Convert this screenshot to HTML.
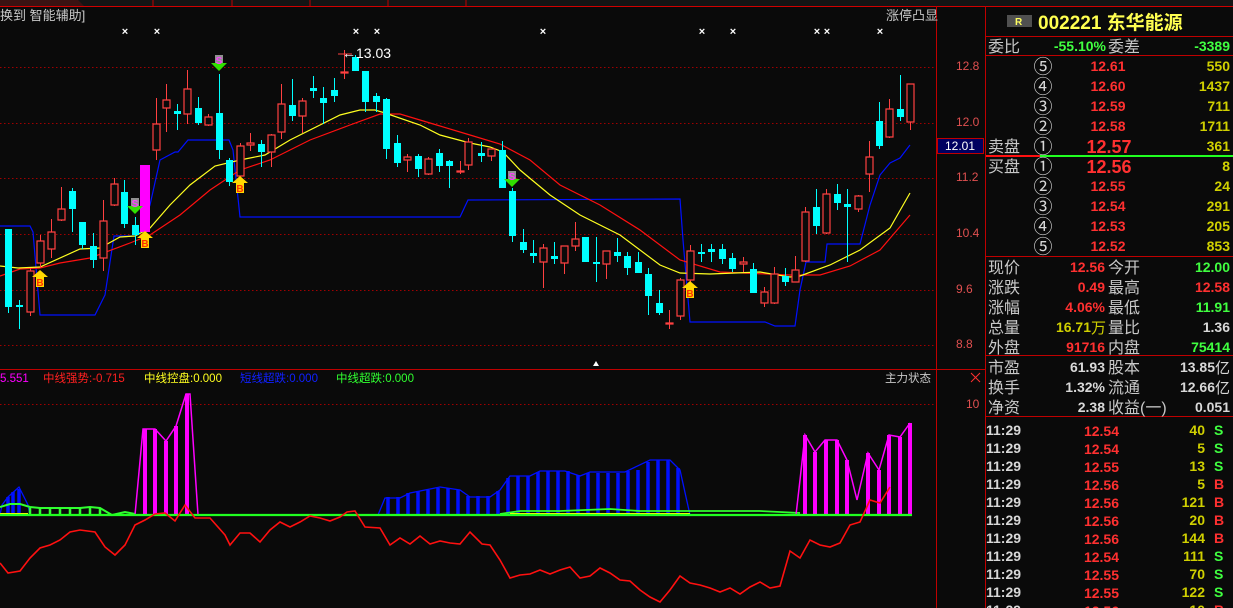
<!DOCTYPE html>
<html><head><meta charset="utf-8"><style>
html,body{margin:0;padding:0;background:#0a0a0a;width:1233px;height:608px;overflow:hidden}
svg{display:block}
text{font-family:"Liberation Sans","Noto Sans CJK SC",sans-serif}
.lb{fill:#c8c8c8;font-size:16px}
.rd{fill:#ff3030}
.ye{fill:#d0d000}
.gr{fill:#40ff40}
.wh{fill:#d8d8d8}
.n{font-size:14px;font-weight:bold;font-family:"Liberation Sans","DejaVu Sans",sans-serif}
.w{stroke:#ff4040;stroke-width:1}
.rb{fill:#0a0a0a;stroke:#ff4040;stroke-width:1.2}
.cw{stroke:#00ffff;stroke-width:1}
.cb{fill:#00ffff}
.g{stroke:#a00000;stroke-dasharray:1.5 2.5;stroke-width:1}
</style></head><body>
<svg width="1233" height="608" viewBox="0 0 1233 608" xmlns="http://www.w3.org/2000/svg">
<rect width="1233" height="608" fill="#0a0a0a"/>
<rect x="0" y="0" width="1233" height="6" fill="#141414"/>
<path d="M0 0H78L84 6H0Z" fill="#3a1212"/>
<path d="M153 0V6M232 0V6M310 0V6M388 0V6M466 0V6" stroke="#c00000"/>
<line x1="0" y1="6.5" x2="1233" y2="6.5" stroke="#d00000"/>
<line x1="936.5" y1="6" x2="936.5" y2="608" stroke="#c00000"/>
<line x1="985.5" y1="6" x2="985.5" y2="608" stroke="#c00000"/>
<line x1="0" y1="369.5" x2="985" y2="369.5" stroke="#c00000"/>
<path class="g" d="M0 67.5H936M0 123.5H936M0 178.5H936M0 234.5H936M0 290.5H936M0 345.5H936M0 404.5H936"/>
<text x="0" y="20" class="lb" style="font-size:13px">换到 智能辅助]</text>
<text x="886" y="20" class="lb" style="font-size:13px">涨停凸显</text>
<g fill="#fff" font-size="11" font-weight="bold" text-anchor="middle">
<text x="125" y="35">×</text><text x="157" y="35">×</text><text x="356" y="35">×</text><text x="377" y="35">×</text><text x="543" y="35">×</text><text x="702" y="35">×</text><text x="733" y="35">×</text><text x="817" y="35">×</text><text x="827" y="35">×</text><text x="880" y="35">×</text>
</g>
<g fill="#e05050" font-size="12" font-family="Liberation Mono,monospace">
<text x="956" y="70">12.8</text><text x="956" y="126">12.0</text><text x="956" y="181">11.2</text><text x="956" y="237">10.4</text><text x="956" y="293">9.6</text><text x="956" y="348">8.8</text>
<text x="966" y="408">10</text>
</g>
<rect x="937.5" y="138.5" width="46" height="15" fill="#000060" stroke="#c00000"/>
<text x="945" y="150" fill="#fff" font-size="12" font-family="Liberation Mono,monospace">12.01</text>
<polyline fill="none" stroke="#0010ff" stroke-width="1.2" points="0,226 30,226 33,232 40,315 95,315 105,295 114,236 135,236 140,232 150,205 160,160 175,152 178,152 188,140 229,140 233,150 240,217 460,217 468,200 680,199 683,240 690,322 765,322 775,326 795,326 800,290 806,262 825,262 827,244 860,244 870,205 880,175 890,163 900,158 910,145"/>
<polyline fill="none" stroke="#ff1010" stroke-width="1.2" points="0,276 20,269 40,268 60,263 90,258 130,243 150,235 180,215 210,190 240,170 270,160 310,140 350,125 380,114 400,114 430,123 470,135 500,144 530,160 560,185 600,205 640,230 680,260 720,272 790,275 820,275 850,266 880,250 910,215"/>
<polyline fill="none" stroke="#ffff20" stroke-width="1.2" points="0,266 18,268 40,267 80,249 100,248 120,237 135,236 150,228 170,205 190,185 215,166 240,160 265,155 290,140 320,125 340,115 360,110 375,110 385,113 420,125 440,135 470,143 490,147 503,152 520,170 550,195 580,215 620,235 660,265 680,273 710,274 760,272 790,277 800,276 830,265 860,250 890,228 910,193"/>
<rect x="140" y="165" width="10" height="67" fill="#ff00ff"/>
<g>
<path class="cw" d="M8.5 229V313M19.5 300V329M72.5 188V232M82.5 222V249M93.5 233V268M124.5 180V228M135.5 217V245M177.5 104V130M198.5 97V125M219.5 74V159M229.5 158V186M261.5 140V167M292.5 79V121M313.5 76V98M323.5 87V124M334.5 78V102M355.5 55V71M365.5 71V112M376.5 93V112M386.5 98V159M397.5 135V167M418.5 154V177M439.5 149V172M449.5 160V188M481.5 142V162M502.5 141V188M512.5 188V242M523.5 229V253M533.5 240V263M554.5 242V264M585.5 237V262M596.5 237V282M617.5 238V262M627.5 252V275M638.5 252V273M648.5 268V315M659.5 290V315M701.5 244V262M711.5 244V262M722.5 244V264M732.5 253V272M753.5 263V293M785.5 268V286M816.5 189V234M837.5 184V210M847.5 189V262M879.5 102V149M900.5 75V121"/>
<path class="cb" d="M5 229h7v78h-7zM16 305h7v2h-7zM69 191h7v18h-7zM79 222h7v23h-7zM90 246h7v14h-7zM121 192h7v32h-7zM132 225h7v10h-7zM174 111h7v3h-7zM195 108h7v15h-7zM216 113h7v37h-7zM226 160h7v22h-7zM258 144h7v8h-7zM289 105h7v11h-7zM310 88h7v3h-7zM320 98h7v5h-7zM331 90h7v6h-7zM352 57h7v14h-7zM362 71h7v31h-7zM373 96h7v6h-7zM383 99h7v50h-7zM394 143h7v20h-7zM415 156h7v13h-7zM436 153h7v13h-7zM446 161h7v5h-7zM478 153h7v3h-7zM499 150h7v38h-7zM509 191h7v45h-7zM520 242h7v8h-7zM530 253h7v3h-7zM551 256h7v3h-7zM582 237h7v25h-7zM593 262h7v2h-7zM614 252h7v4h-7zM624 256h7v12h-7zM635 262h7v11h-7zM645 274h7v22h-7zM656 303h7v10h-7zM698 252h7v2h-7zM708 249h7v3h-7zM719 249h7v10h-7zM729 258h7v11h-7zM750 269h7v24h-7zM782 276h7v6h-7zM813 207h7v19h-7zM834 194h7v9h-7zM844 204h7v3h-7zM876 121h7v25h-7zM897 109h7v8h-7z"/>
</g>
<path class="w" d="M30.5 268V316M40.5 235V268M51.5 219V258M61.5 187V221M103.5 200V271M114.5 178V206M156.5 98V160M166.5 84V132M187.5 70V124M208.5 114V126M240.5 143V181M250.5 133V151M271.5 134V167M281.5 84V139M302.5 98V133M344.5 50V79M407.5 154V172M428.5 157V175M460.5 161V174M468.5 138V170M491.5 149V161M543.5 244V288M564.5 246V274M575.5 222V251M606.5 251V279M669.5 310V329M680.5 278V320M690.5 245V290M743.5 257V272M764.5 287V307M774.5 267V304M795.5 256V282M805.5 207V262M826.5 189V234M858.5 195V212M869.5 141V192M889.5 99V138M910.5 84V130"/>
<path class="rb" d="M27 271h7v41h-7zM37 241h7v22h-7zM48 232h7v17h-7zM58 209h7v11h-7zM100 221h7v37h-7zM111 184h7v21h-7zM153 124h7v26h-7zM163 100h7v8h-7zM184 89h7v25h-7zM205 117h7v8h-7zM237 146h7v30h-7zM247 143h7v2h-7zM268 135h7v17h-7zM278 104h7v28h-7zM299 101h7v15h-7zM341 72h7v1h-7zM404 157h7v3h-7zM425 159h7v15h-7zM457 171h7v1h-7zM465 142h7v23h-7zM488 149h7v7h-7zM540 248h7v14h-7zM561 246h7v17h-7zM572 239h7v7h-7zM603 251h7v13h-7zM666 323h7v1h-7zM677 280h7v36h-7zM687 251h7v29h-7zM740 262h7v2h-7zM761 292h7v11h-7zM771 274h7v29h-7zM792 270h7v12h-7zM802 212h7v49h-7zM823 194h7v39h-7zM855 196h7v13h-7zM866 157h7v17h-7zM886 109h7v28h-7zM907 84h7v38h-7z"/>
<path d="M338 54h14" stroke="#ff4040"/>
<text x="342" y="58" fill="#fff" font-size="14" font-family="Liberation Mono,monospace">←13.03</text>
<g>
<g transform="translate(40,270)"><path d="M0 0L8 7H4V17H-4V7H-8Z" fill="#ffd800"/><text x="0" y="16" text-anchor="middle" fill="#ff3000" font-size="10" font-weight="bold">B</text></g>
<g transform="translate(145,231)"><path d="M0 0L8 7H4V17H-4V7H-8Z" fill="#ffd800"/><text x="0" y="16" text-anchor="middle" fill="#ff3000" font-size="10" font-weight="bold">B</text></g>
<g transform="translate(240,176)"><path d="M0 0L8 7H4V17H-4V7H-8Z" fill="#ffd800"/><text x="0" y="16" text-anchor="middle" fill="#ff3000" font-size="10" font-weight="bold">B</text></g>
<g transform="translate(690,281)"><path d="M0 0L8 7H4V17H-4V7H-8Z" fill="#ffd800"/><text x="0" y="16" text-anchor="middle" fill="#ff3000" font-size="10" font-weight="bold">B</text></g>
</g>
<g>
<g transform="translate(135,198)"><rect x="-4" y="0" width="8" height="9" fill="#909090"/><path d="M-8 8H8L0 16Z" fill="#30e000"/><text x="0" y="9" text-anchor="middle" fill="#ff40ff" font-size="10" font-weight="bold">S</text></g>
<g transform="translate(219,55)"><rect x="-4" y="0" width="8" height="9" fill="#909090"/><path d="M-8 8H8L0 16Z" fill="#30e000"/><text x="0" y="9" text-anchor="middle" fill="#ff40ff" font-size="10" font-weight="bold">S</text></g>
<g transform="translate(512,171)"><rect x="-4" y="0" width="8" height="9" fill="#909090"/><path d="M-8 8H8L0 16Z" fill="#30e000"/><text x="0" y="9" text-anchor="middle" fill="#ff40ff" font-size="10" font-weight="bold">S</text></g>
</g>
<path d="M596 361L599 366H593Z" fill="#fff"/>
<g font-size="11.5" font-family="Liberation Sans,Noto Sans CJK SC,sans-serif">
<text x="0" y="382" fill="#ff00ff">5.551</text>
<text x="43" y="382" fill="#ff2020">中线强势:-0.715</text>
<text x="144" y="382" fill="#ffff20">中线控盘:0.000</text>
<text x="240" y="382" fill="#1020ff">短线超跌:0.000</text>
<text x="336" y="382" fill="#30ff30">中线超跌:0.000</text>
<text x="885" y="382" fill="#c8c8c8">主力状态</text>
</g>
<path d="M971 373l9 9M980 373l-9 9" stroke="#ff3030"/>
<polyline points="0,515 2,505 8,497 19,487 28,505 30,515" fill="none" stroke="#0010ff" stroke-width="1.3"/>
<path d="M378 515L385 498H400L410 493L440 487L460 490L470 497H490L500 490L510 476H530L540 471H565L580 476L590 472H625L650 460H670L680 470L690 515Z" fill="none" stroke="#0010ff" stroke-width="1.3"/>
<path d="M8 515V497M13 515V492M19 515V489M388 515V497M398 515V497M408 515V493M418 515V491M428 515V490M438 515V488M448 515V488M458 515V490M468 515V496M478 515V496M488 515V496M498 515V491M508 515V478M518 515V476M528 515V476M538 515V472M548 515V471M558 515V471M568 515V471M578 515V475M588 515V473M598 515V473M608 515V473M618 515V473M628 515V471M638 515V470M648 515V462M658 515V460M668 515V460M678 515V468" stroke="#0010ff" stroke-width="3.5"/>
<polyline fill="none" stroke="#30ff30" stroke-width="2" points="0,507 10,504 20,504 30,507 40,508 80,508 90,507 100,508 112,515 125,512 135,514"/>
<path d="M30 515V508M40 515V508M50 515V508M60 515V508M70 515V508M80 515V508M90 515V507M100 515V508" stroke="#30ff30" stroke-width="2.5"/>
<polyline fill="none" stroke="#30ff30" stroke-width="1.8" points="500,514 520,511 560,511 585,510 610,509 640,511 680,511 740,511 760,511 800,513"/>
<path d="M0 514H28M510 514H690" stroke="#ffff00" stroke-width="2"/>
<polyline fill="none" stroke="#ff00ff" stroke-width="1.5" points="135,515 143,429 155,429 166,441 176,426 186,394 190,394 198,515"/>
<path d="M145 515V429M155 515V429M166 515V441M176 515V426M187 515V394" stroke="#ff00ff" stroke-width="4"/>
<polyline fill="none" stroke="#ff00ff" stroke-width="1.5" points="796,515 800,480 805,435 815,452 825,440 837,440 847,460 857,500 868,453 879,470 889,435 900,437 910,423"/>
<path d="M805 515V435M815 515V452M826 515V440M837 515V440M847 515V460M868 515V453M879 515V470M889 515V435M900 515V437M910 515V423" stroke="#ff00ff" stroke-width="4"/>
<line x1="0" y1="515" x2="912" y2="515" stroke="#20ff20" stroke-width="2.2"/>
<polyline fill="none" stroke="#ff1010" stroke-width="1.6" points="0,563 8,573 20,571 30,558 40,548 50,545 60,540 70,532 80,530 95,532 105,547 115,555 125,545 135,525 145,520 155,514 165,513 175,521 185,505 195,518 210,518 225,535 230,545 240,533 250,533 260,542 270,530 280,522 290,527 300,522 310,516 320,518 330,521 340,517 347,512 355,511 365,527 380,528 390,545 400,538 410,544 420,536 430,544 440,541 450,543 460,544 470,532 482,544 490,545 500,560 510,578 520,575 530,574 540,570 550,574 560,570 570,567 580,578 590,576 600,568 610,573 620,580 630,581 640,590 650,597 660,602 670,590 680,576 690,583 700,585 710,588 720,592 730,588 740,594 750,587 760,582 770,588 780,586 790,551 800,558 810,540 820,545 830,547 840,543 850,525 860,522 870,500 880,503 890,487"/>
<rect x="1007" y="15" width="25" height="12" fill="#505050"/>
<text x="1015" y="25" fill="#ffff60" font-size="10" font-weight="bold">R</text>
<text x="1038" y="29" fill="#ffff50" font-size="19" font-weight="bold">002221 东华能源</text>
<path d="M986 36.5H1233M986 55.5H1233M986 256.5H1233M986 355.5H1233M986 416.5H1233" stroke="#c00000"/>
<line x1="986" y1="156" x2="1040" y2="156" stroke="#ff1010" stroke-width="2"/>
<line x1="1040" y1="156" x2="1233" y2="156" stroke="#20ff20" stroke-width="2"/>
<text x="988" y="52" class="lb">委比</text>
<text x="1106" y="51" class="gr n" text-anchor="end">-55.10%</text>
<text x="1108" y="52" class="lb">委差</text>
<text x="1230" y="51" class="gr n" text-anchor="end">-3389</text>
<g class="wh" font-size="19" text-anchor="middle">
<text x="1043" y="73">⑤</text><text x="1043" y="93">④</text><text x="1043" y="113">③</text><text x="1043" y="133">②</text><text x="1043" y="153">①</text>
<text x="1043" y="173">①</text><text x="1043" y="193">②</text><text x="1043" y="213">③</text><text x="1043" y="233">④</text><text x="1043" y="253">⑤</text>
</g>
<text x="988" y="152" class="lb">卖盘</text>
<text x="988" y="172" class="lb">买盘</text>
<g class="rd n" text-anchor="middle">
<text x="1108" y="71">12.61</text><text x="1108" y="91">12.60</text><text x="1108" y="111">12.59</text><text x="1108" y="131">12.58</text>
<text x="1109" y="153" font-size="18">12.57</text><text x="1109" y="173" font-size="18">12.56</text>
<text x="1108" y="191">12.55</text><text x="1108" y="211">12.54</text><text x="1108" y="231">12.53</text><text x="1108" y="251">12.52</text>
</g>
<g class="ye n" text-anchor="end">
<text x="1230" y="71">550</text><text x="1230" y="91">1437</text><text x="1230" y="111">711</text><text x="1230" y="131">1711</text><text x="1230" y="151">361</text>
<text x="1230" y="171">8</text><text x="1230" y="191">24</text><text x="1230" y="211">291</text><text x="1230" y="231">205</text><text x="1230" y="251">853</text>
</g>
<g class="lb">
<text x="988" y="273">现价</text><text x="988" y="293">涨跌</text><text x="988" y="313">涨幅</text><text x="988" y="333">总量</text><text x="988" y="353">外盘</text>
<text x="1108" y="273">今开</text><text x="1108" y="293">最高</text><text x="1108" y="313">最低</text><text x="1108" y="333">量比</text><text x="1108" y="353">内盘</text>
<text x="988" y="373">市盈</text><text x="988" y="393">换手</text><text x="988" y="413">净资</text>
<text x="1108" y="373">股本</text><text x="1108" y="393">流通</text><text x="1108" y="413">收益(一)</text>
</g>
<g class="n" text-anchor="end">
<text x="1105" y="272" class="rd">12.56</text><text x="1105" y="292" class="rd">0.49</text><text x="1105" y="312" class="rd">4.06%</text>
<text x="1091" y="332" class="ye">16.71</text><text x="1105" y="352" class="rd">91716</text>
<text x="1230" y="272" class="gr">12.00</text><text x="1230" y="292" class="rd">12.58</text><text x="1230" y="312" class="gr">11.91</text>
<text x="1230" y="332" class="wh">1.36</text><text x="1230" y="352" class="gr">75414</text>
<text x="1105" y="372" class="wh">61.93</text><text x="1105" y="392" class="wh">1.32%</text><text x="1105" y="412" class="wh">2.38</text>
<text x="1215" y="372" class="wh">13.85</text><text x="1215" y="392" class="wh">12.66</text><text x="1230" y="412" class="wh">0.051</text>
</g>
<text x="1091" y="333" class="ye" font-size="15">万</text>
<text x="1215" y="373" class="wh" font-size="15">亿</text>
<text x="1215" y="393" class="wh" font-size="15">亿</text>
<g class="n">
<g class="wh"><text x="986" y="435">11:29</text><text x="986" y="453">11:29</text><text x="986" y="471">11:29</text><text x="986" y="489">11:29</text><text x="986" y="507">11:29</text><text x="986" y="525">11:29</text><text x="986" y="543">11:29</text><text x="986" y="561">11:29</text><text x="986" y="579">11:29</text><text x="986" y="597">11:29</text><text x="986" y="615">11:29</text></g>
<g class="rd" text-anchor="end"><text x="1119" y="436">12.54</text><text x="1119" y="454">12.54</text><text x="1119" y="472">12.55</text><text x="1119" y="490">12.56</text><text x="1119" y="508">12.56</text><text x="1119" y="526">12.56</text><text x="1119" y="544">12.56</text><text x="1119" y="562">12.54</text><text x="1119" y="580">12.55</text><text x="1119" y="598">12.55</text><text x="1119" y="616">12.56</text></g>
<g class="ye" text-anchor="end"><text x="1205" y="435">40</text><text x="1205" y="453">5</text><text x="1205" y="471">13</text><text x="1205" y="489">5</text><text x="1205" y="507">121</text><text x="1205" y="525">20</text><text x="1205" y="543">144</text><text x="1205" y="561">111</text><text x="1205" y="579">70</text><text x="1205" y="597">122</text><text x="1205" y="615">10</text></g>
<text x="1214" y="435" class="gr">S</text><text x="1214" y="453" class="gr">S</text><text x="1214" y="471" class="gr">S</text><text x="1214" y="489" class="rd">B</text><text x="1214" y="507" class="rd">B</text><text x="1214" y="525" class="rd">B</text><text x="1214" y="543" class="rd">B</text><text x="1214" y="561" class="gr">S</text><text x="1214" y="579" class="gr">S</text><text x="1214" y="597" class="gr">S</text><text x="1214" y="615" class="rd">B</text>
</g>
</svg>
</body></html>
